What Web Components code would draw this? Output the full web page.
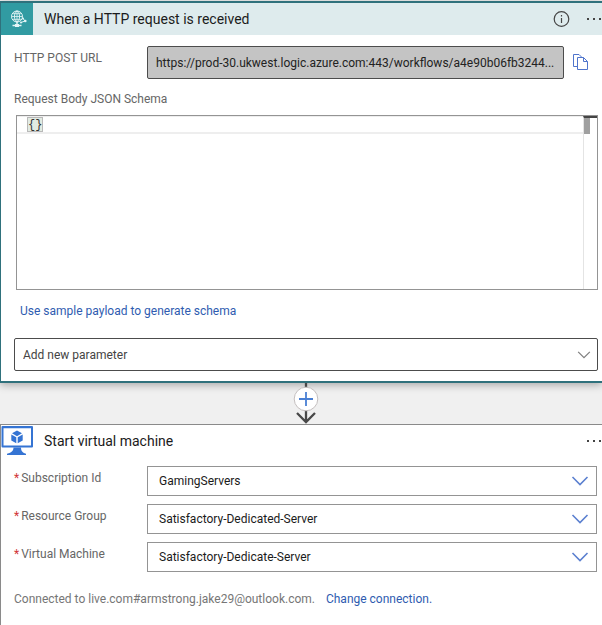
<!DOCTYPE html>
<html lang="en">
<head>
<meta charset="utf-8">
<title>Logic app designer</title>
<style>
  body { margin: 0; background: #f0f0f0; font-family: Roboto, "Open Sans", sans-serif; font-size: 12px; color: #222; overflow-x: hidden; }
</style>
</head>
<body>
<designer-canvas></designer-canvas>

<script>
const define = (name, html) => customElements.define(name, class extends HTMLElement {
  connectedCallback() {
    if (this.shadowRoot) return;
    const t = document.createElement('template');
    t.innerHTML = html(this);
    this.attachShadow({ mode: 'open' }).append(t.content.cloneNode(true));
  }
});

define('more-button', () => `
  <style>
    :host { display: block; }
    button { display: block; border: 0; background: none; padding: 0; width: 16px; height: 24px; cursor: pointer; }
    svg { display: block; }
  </style>
  <button type="button" aria-label="More commands">
    <svg width="16" height="24" viewBox="0 0 16 24" fill="#444"><path d="M1 11h2v2H1zM7 11h2v2H7zM13 11h2v2h-2z"/></svg>
  </button>`);

define('operation-card', el => `
  <style>
    :host { display: block; background: #fff; border: 1px solid #8a8a8a; border-width: 1px 0 0 1px; }
    :host([selected]) { border-color: #2f717c; border-width: 2px 0 2px 1px; box-shadow: 0 2px 8px rgba(0,0,0,.3); }
    header { display: flex; align-items: center; height: 32px; gap: 11px; }
    :host([selected]) header { background: #deebed; }
    h2 { flex: 1; margin: 0; font-size: 14px; line-height: 20px; font-weight: 400; color: #1b1b1b; white-space: nowrap; }
    .actions { display: flex; align-items: center; gap: 16px; }
  </style>
  <header>
    <slot name="icon"></slot>
    <h2>${el.getAttribute('heading')}</h2>
    <div class="actions"><slot name="actions"></slot><more-button></more-button></div>
  </header>
  <slot></slot>`);

define('request-icon', () => `
  <style>:host { display: block; width: 32px; height: 32px; background: #319ba2; } svg { display: block; }</style>
  <svg width="32" height="32" viewBox="0 0 32 32" fill="none" stroke="#e4f5f6" stroke-width="1">
    <circle cx="16" cy="13.500" r="5.500"/><ellipse cx="16" cy="13.500" rx="2.500" ry="5.500"/>
    <path d="M16 8v11M10.500 13.500h11M11.500 10.700h9M11.500 16.300h9" stroke-width=".8"/>
    <path d="M16 19v3M11.500 22.500h9" stroke-width="1.400"/><path d="M14 22.500h4" stroke-width="3"/>
    <path d="M20 19.500l4-1.500M22 15.500l2 2.500"/>
    <circle cx="24.300" cy="18" r="1.300" fill="#e4f5f6" stroke="none"/><circle cx="22" cy="15.500" r="1" fill="#e4f5f6" stroke="none"/><circle cx="20" cy="19.500" r="1" fill="#e4f5f6" stroke="none"/>
  </svg>`);

define('vm-icon', () => `
  <style>:host { display: block; width: 32px; height: 32px; } svg { display: block; }</style>
  <svg width="32" height="32" viewBox="0 0 32 32">
    <path fill="#3574d3" fill-rule="evenodd" d="M1.500 1h29.500a1 1 0 0 1 1 1v19.500a1 1 0 0 1-1 1H1.500a1 1 0 0 1-1-1V2a1 1 0 0 1 1-1zM2.500 3.200v17.200h27.500V3.200z"/>
    <path fill="#3574d3" d="M12.500 22.500h7.500c0 3 1 5 5 6.200V30H6v-1.300c5-1.200 6.500-3.200 6.500-6.200z"/>
    <path fill="#3574d3" d="M16 5.500l5 2.800-5 2.900-5-2.900zM10.300 9.400l5 2.900v6l-5-2.900zM21.700 9.400l-5 2.900v6l5-2.900z"/>
  </svg>`);

define('info-button', () => `
  <style>:host { display: block; } button { display: block; border: 0; padding: 0; background: none; cursor: pointer; } svg { display: block; }</style>
  <button type="button" aria-label="Information">
    <svg width="18" height="18" viewBox="0 0 18 18" fill="none" stroke="#444"><circle cx="9.500" cy="9" r="7.300" stroke-width="1.200"/><path d="M9.500 8v5M9.500 5v1.500" stroke-width="1.200"/></svg>
  </button>`);

define('drop-down', el => `
  <style>
    :host { display: grid; grid-template-columns: 146px 1fr; padding-right: 5px; }
    :host([wide]) { display: block; padding: 0; }
    label { padding: 2px 0 0 13px; line-height: 20px; color: #666; }
    :host([wide]) label { display: none; }
    i { font-style: normal; color: #d13438; margin-right: 2px; }
    .box { display: grid; align-items: center; }
    select, svg { grid-area: 1 / 1; }
    select { appearance: none; width: 100%; height: 30px; margin: 0; padding: 0 32px 0 11px; border: 1px solid #949494; border-radius: 0; background: #fff; color: #1b1b1b; font: inherit; }
    :host([wide]) select { height: 33px; padding-left: 8px; border-color: #4c4c4c; border-radius: 2px; color: #444; }
    svg { justify-self: end; margin-right: 8px; pointer-events: none; color: #5c80d0; }
    :host([wide]) svg { margin-right: 7px; color: #808080; width: 14px; }
  </style>
  <label for="s"><i>*</i>${el.getAttribute('label')}</label>
  <div class="box">
    <select id="s" aria-label="${el.getAttribute('label')}"><option>${el.getAttribute('value')}</option></select>
    <svg width="18" height="12" viewBox="0 0 18 12" fill="none" stroke="currentColor" stroke-width="1.600"><path d="M1.500 2L9 9.500 16.500 2"/></svg>
  </div>`);

define('url-field', el => `
  <style>
    :host { display: grid; grid-template-columns: 133px 1fr 34px; align-items: start; }
    label { padding-top: 2px; line-height: 20px; color: #666; }
    input { box-sizing: border-box; min-width: 0; width: 100%; height: 33px; margin: 0; padding: 0 8px; border: 1px solid #4c4c4c; border-radius: 2px; background: #c4c4c4; color: #222; font: inherit; text-overflow: ellipsis; outline: 0; }
    button { justify-self: center; margin: 7px 0 0; padding: 0; border: 0; background: none; cursor: pointer; }
    svg { display: block; }
  </style>
  <label for="u">${el.getAttribute('label')}</label>
  <input id="u" readonly value="${el.getAttribute('value')}">
  <button type="button" aria-label="Copy URL">
    <svg width="17" height="18" viewBox="0 0 17 18" fill="none" stroke="#4f74cc"><path d="M4.500 13.500h-4v-12h5.500l3 3M4.500 4.500h6l4 4v8h-10zM10.500 4.500v4h4"/></svg>
  </button>`);

define('schema-editor', el => `
  <style>
    :host { display: block; }
    label { display: block; line-height: 20px; color: #666; margin-bottom: 6px; }
    .editor { display: grid; grid-template-columns: 1fr 14px; grid-template-rows: 18px 1fr; height: 173px; margin: 0 0 0 2px; border: 1px solid #949494; background: #fff; }
    .line { grid-area: 1 / 1; display: flex; padding-left: 10px; border-bottom: 2px solid #eee; border-top: 1px solid #eee; }
    .line span { box-sizing: border-box; width: 16px; background: #e2ebe2; border: 1px solid #b9b9b9; }
    textarea { grid-area: 1 / 1 / 3 / 2; box-sizing: border-box; width: 100%; height: 100%; margin: 0; padding: 1px 0 0 11px; border: 0; outline: 0; resize: none; background: none; color: #333; font: 12px/16px "Liberation Mono", monospace; }
    .ruler { grid-area: 1 / 2 / 3 / 3; border-left: 1px solid #e4e4e4; border-top: 2px solid #444; }
    .ruler div { width: 6px; height: 16px; background: #a0a0a0; }
  </style>
  <label for="e">${el.getAttribute('label')}</label>
  <div class="editor">
    <div class="line"><span></span></div>
    <div class="ruler"><div></div></div>
    <textarea id="e" spellcheck="false">{}</textarea>
  </div>`);

define('step-connector', () => `
  <style>
    :host { display: flex; justify-content: center; height: 41px; margin-left: 10px; }
    button { border: 0; padding: 0; background: none; cursor: pointer; }
    svg { display: block; }
  </style>
  <button type="button" aria-label="Insert a new step">
    <svg width="28" height="41" viewBox="0 0 28 41" fill="none">
      <path d="M14 0v39M5 30l9 9 9-9" stroke="#484848" stroke-width="2.300"/>
      <circle cx="14" cy="16" r="11.800" fill="#fff" stroke="#c4bfbf"/>
      <path d="M14 9v14M7 16h14" stroke="#4a80d4" stroke-width="1.800"/>
    </svg>
  </button>`);

define('text-link', () => `
  <style>:host { display: inline; } a { color: #2f5cb0; text-decoration: none; }</style>
  <a href="#"><slot></slot></a>`);

define('designer-canvas', () => `
  <style>
    :host { display: flex; flex-direction: column; min-height: 100vh; padding-top: 1px; box-sizing: border-box; }
    .trigger { padding: 11px 4px 10px 13px; }
    schema-editor { margin-top: 10px; }
    .sample { padding: 0 6px; margin: 11px 0 17px; line-height: 20px; }
    .action { flex: 1; }
    .rows { display: grid; gap: 8px; padding-top: 9px; }
    .connection { margin: 0; padding: 17px 13px 10px; line-height: 20px; color: #767676; }
    .connection text-link { margin-left: 8px; }
  </style>
  <operation-card selected heading="When a HTTP request is received">
    <request-icon slot="icon"></request-icon>
    <info-button slot="actions"></info-button>
    <div class="trigger">
      <url-field label="HTTP POST URL" value="https://prod-30.ukwest.logic.azure.com:443/workflows/a4e90b06fb3244..."></url-field>
      <schema-editor label="Request Body JSON Schema"></schema-editor>
      <div class="sample"><text-link>Use sample payload to generate schema</text-link></div>
      <drop-down wide label="Add new parameter" value="Add new parameter"></drop-down>
    </div>
  </operation-card>
  <step-connector></step-connector>
  <operation-card class="action" heading="Start virtual machine">
    <vm-icon slot="icon"></vm-icon>
    <div class="rows">
      <drop-down label="Subscription Id" value="GamingServers"></drop-down>
      <drop-down label="Resource Group" value="Satisfactory-Dedicated-Server"></drop-down>
      <drop-down label="Virtual Machine" value="Satisfactory-Dedicate-Server"></drop-down>
    </div>
    <p class="connection">Connected to live.com#armstrong.jake29@outlook.com. <text-link>Change connection.</text-link></p>
  </operation-card>`);
</script>
</body>
</html>
